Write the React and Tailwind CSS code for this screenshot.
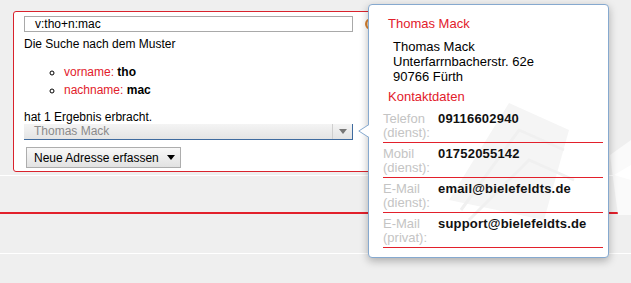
const red = 'text-[#e2202b]';

const contacts = [
  { label: 'Telefon', sub: '(dienst):', value: '09116602940' },
  { label: 'Mobil', sub: '(dienst):', value: '01752055142' },
  { label: 'E-Mail', sub: '(dienst):', value: 'email@bielefeldts.de' },
  { label: 'E-Mail', sub: '(privat):', value: 'support@bielefeldts.de' },
];

const Caret = ({ className }) => (
  <svg width="8" height="5" viewBox="0 0 8 5" className={className}>
    <polygon points="0,0 8,0 4,5" fill="currentColor" />
  </svg>
);

const SearchPanel = () => (
  <div className="ml-[13px] w-[400px] rounded-[3px] border border-[#d9232d] bg-white pl-[10px] pt-[4px] pb-[3px] text-[12px] text-black">
    <div className="flex items-center gap-[12px]">
      <div className="h-[16px] w-[329px] border border-[#a9a9a9] pl-[10px] leading-[14px]">
        v:tho+n:mac
      </div>
      <div className="h-[12px] w-[12px] rounded-full border-2 border-[#d9822f] bg-[#f3d2b0]" />
    </div>
    <p className="mt-[5px] leading-[14px]">Die Suche nach dem Muster</p>
    <ul className="mt-[12px] mb-[12px] list-[circle] pl-[40px] leading-[18px]">
      <li>
        <span className={red}>vorname: </span>
        <b>tho</b>
      </li>
      <li>
        <span className={red}>nachname: </span>
        <b>mac</b>
      </li>
    </ul>
    <p className="leading-[13px]">hat 1 Ergebnis erbracht.</p>
    {/* result select */}
    <div className="flex h-[16px] w-[329px] items-stretch border-r border-b border-[#3f6b9f] bg-gradient-to-b from-[#f4f4f4] to-[#e4e4e4] leading-[15px]">
      <span className="flex-1 pl-[10px] text-[#8a8a8a]">Thomas Mack</span>
      <span className="flex w-[20px] items-center justify-center border-l border-[#cfcfcf] text-[#777]">
        <Caret />
      </span>
    </div>
    <button className="mt-[7px] ml-[2px] flex h-[21px] w-[155px] items-center gap-[8px] border border-[#adadad] bg-gradient-to-b from-[#f8f8f8] to-[#e2e2e2] pl-[7px] text-[12px] text-black">
      Neue Adresse erfassen
      <Caret className="text-black" />
    </button>
  </div>
);

const ContactPopover = () => (
  <div className="absolute left-[368px] top-[4px] h-[254px] w-[241px] rounded-[4px] border border-[#86a9cf] bg-white shadow-[0_3px_8px_rgba(0,0,0,0.28)]">
    {/* faint watermark */}
    <svg className="absolute inset-0" width="239" height="252">
      <polygon points="80,195 140,98 200,125 175,215" fill="#f5f5f5" />
      <polyline points="92,205 150,125 195,145" fill="none" stroke="#f0f0f0" strokeWidth="3" />
      <polyline points="100,215 160,155 205,175" fill="none" stroke="#f0f0f0" strokeWidth="3" />
    </svg>
    {/* pointer */}
    <svg className="absolute left-[-11px] top-[119px]" width="12" height="15">
      <polygon points="12,0 0.5,7 12,14" fill="white" />
      <polyline points="11,0.5 0.8,7 11,13.5" fill="none" stroke="#86a9cf" />
    </svg>
    <div className="relative pt-[11px] pl-[19px] pr-[5px]">
      <h2 className={`text-[13px] leading-[16px] ${red}`}>Thomas Mack</h2>
      <div className="mt-[7px] pl-[5px] text-[13px] leading-[15px] text-black">
        <p>Thomas Mack</p>
        <p>Unterfarrnbacherstr. 62e</p>
        <p>90766 Fürth</p>
      </div>
      <h3 className={`mt-[5px] text-[13px] leading-[16px] ${red}`}>Kontaktdaten</h3>
      <div className="-ml-[5px] mt-[3px]">
        {contacts.map((c, i) => (
          <div key={i} className="flex border-b border-[#e2202b] pt-[4px] pb-[2px] text-[13px] leading-[14px]">
            <div className="w-[55px] text-[#c4c4c4]">
              <div>{c.label}</div>
              <div>{c.sub}</div>
            </div>
            <div className="font-bold tracking-[0.2px] text-[#111]">{c.value}</div>
          </div>
        ))}
      </div>
    </div>
  </div>
);

export default function App() {
  return (
    <div
      className="relative h-[283px] w-[631px] overflow-hidden bg-[#efefef] pt-[11px]"
      style={{ fontFamily: '"Liberation Sans", Arial, sans-serif' }}
    >
      <SearchPanel />
      <div className="mt-[3px] h-px bg-white" />
      <div className="mt-[36px] h-[2px] bg-[#e2202b]" />
      <div className="mt-[39px] h-px bg-white" />
      {/* page watermark to the right */}
      <svg className="absolute left-[600px] top-[135px]" width="31" height="85">
        <polygon points="10,20 31,5 31,80 18,80" fill="#fafafa" />
        <polygon points="14,40 31,30 31,45" fill="#ffffff" />
      </svg>
      <ContactPopover />
    </div>
  );
}
